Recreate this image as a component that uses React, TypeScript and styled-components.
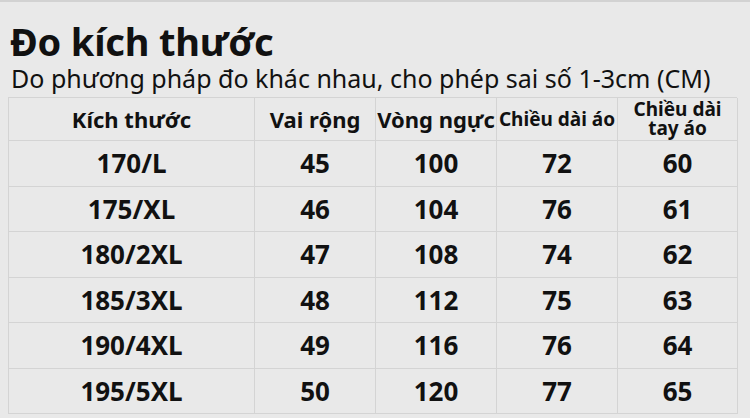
import React from 'react'
import styled, { createGlobalStyle } from 'styled-components'

const GlobalStyle = createGlobalStyle`
  html, body {
    margin: 0;
    padding: 0;
    background: #e9e9e9;
  }
  body {
    font-family: "Noto Sans", "Open Sans", sans-serif;
    color: #111;
  }
`

const Page = styled.div`
  width: 750px;
  height: 418px;
  box-sizing: border-box;
  border-top: 2px solid #d2d2d2;
  padding: 0 13px 0 8px;
  overflow: hidden;
`

const Title = styled.h1`
  margin: 18px 0 0 2px;
  font-size: 38px;
  line-height: 42px;
  font-weight: 700;
  letter-spacing: -0.2px;
`

const Subtitle = styled.div`
  margin: 0 0 0 3px;
  font-size: 25px;
  line-height: 32px;
  font-weight: 400;
`

const Table = styled.div`
  display: grid;
  grid-template-columns: 246px 121px 121px 121px 120px;
  grid-template-rows: 43px repeat(6, 45.5px);
  border-top: 1px solid #d4d4d4;
  border-left: 1px solid #d4d4d4;
  margin-top: 3px;
`

const Cell = styled.div<{ $head?: boolean; $small?: boolean }>`
  display: flex;
  align-items: center;
  justify-content: center;
  text-align: center;
  border-right: 1px solid #d4d4d4;
  border-bottom: 1px solid #d4d4d4;
  font-weight: 700;
  font-size: ${p => (p.$small ? '19px' : p.$head ? '22px' : '26px')};
  line-height: ${p => (p.$small ? '19px' : '26px')};
  white-space: nowrap;
`

const headers = ['Kích thước', 'Vai rộng', 'Vòng ngực', 'Chiều dài áo', 'Chiều dài\ntay áo']

const rows = [
  ['170/L', '45', '100', '72', '60'],
  ['175/XL', '46', '104', '76', '61'],
  ['180/2XL', '47', '108', '74', '62'],
  ['185/3XL', '48', '112', '75', '63'],
  ['190/4XL', '49', '116', '76', '64'],
  ['195/5XL', '50', '120', '77', '65'],
]

export default function App() {
  return (
    <Page>
      <GlobalStyle />
      <Title>Đo kích thước</Title>
      <Subtitle>Do phương pháp đo khác nhau, cho phép sai số 1-3cm (CM)</Subtitle>
      <Table>
        {headers.map((h, i) => (
          <Cell key={h} $head $small={i >= 3}>
            {i === 4 ? (
              <span>
                Chiều dài
                <br />
                tay áo
              </span>
            ) : (
              h
            )}
          </Cell>
        ))}
        {rows.map(r =>
          r.map((v, i) => <Cell key={r[0] + i}>{v}</Cell>)
        )}
      </Table>
    </Page>
  )
}
